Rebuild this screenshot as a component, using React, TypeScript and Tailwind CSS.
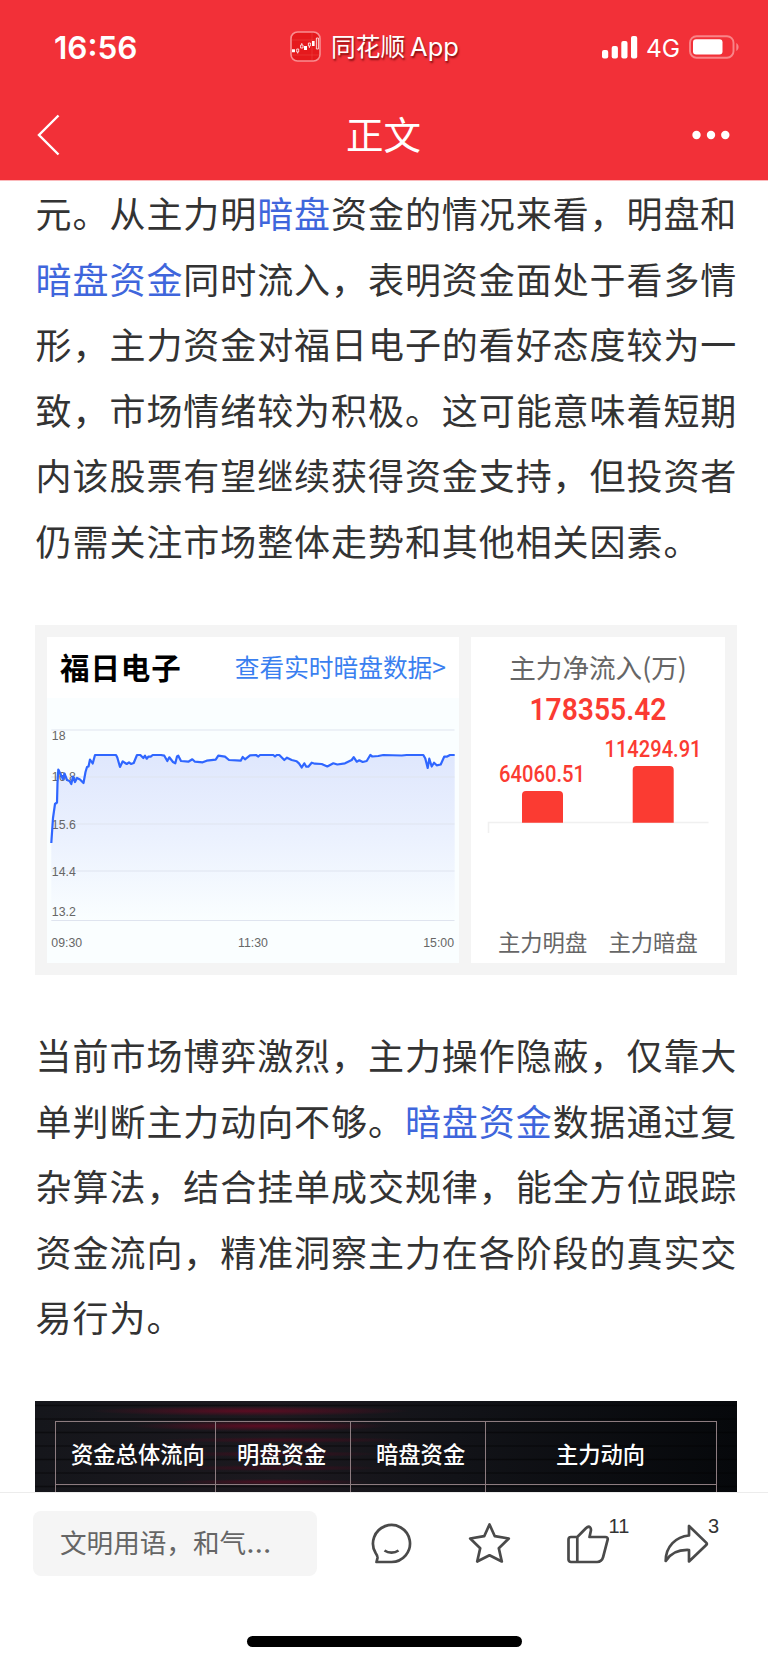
import React from 'react';

const LINK_COLOR = 'text-[#3f66dc]';

interface Segment {
  text: string;
  link?: boolean;
}

const introLines: Segment[][] = [
  [{ text: '元。从主力明' }, { text: '暗盘', link: true }, { text: '资金的情况来看，明盘和' }],
  [{ text: '暗盘资金', link: true }, { text: '同时流入，表明资金面处于看多情' }],
  [{ text: '形，主力资金对福日电子的看好态度较为一' }],
  [{ text: '致，市场情绪较为积极。这可能意味着短期' }],
  [{ text: '内该股票有望继续获得资金支持，但投资者' }],
  [{ text: '仍需关注市场整体走势和其他相关因素。' }],
];

const analysisLines: Segment[][] = [
  [{ text: '当前市场博弈激烈，主力操作隐蔽，仅靠大' }],
  [{ text: '单判断主力动向不够。' }, { text: '暗盘资金', link: true }, { text: '数据通过复' }],
  [{ text: '杂算法，结合挂单成交规律，能全方位跟踪' }],
  [{ text: '资金流向，精准洞察主力在各阶段的真实交' }],
  [{ text: '易行为。' }],
];

// Price series, in px of the chart area (412 x 265)
const PRICE_LINE =
  '4.3,145 6,120 8,106 10,104.5 10.5,85 11.3,71.5 13,75 16,81 17.5,75.5 20,82 22.5,83 24.3,86 26,78.5 28,84 30,80 33,81.5 36.5,85 38.5,74 40,69 41.5,68.5 43,61.5 45.7,65.5 48,57 69,57 70.3,59.5 73,69 75.7,63.3 79.7,66 82,64.3 84,66 86.7,65 90,57 93.3,57 96.3,60 98,57.7 99.7,60.7 101.5,58.5 103.7,58.7 105.7,57 114,57 117.3,57.7 120.3,63 122.3,59.3 126,64 128.3,65.3 130,58.5 131.3,57.7 134,63 141.3,63.7 145.3,61.3 148,63.7 155.7,64.3 159.7,62.7 168.7,61.7 171.3,57.7 178,58.7 182,62 193.7,62.7 195.7,59 198,61.3 203,57.3 209,57 211.3,58.5 213,57 226.3,57 228,58.5 229.7,57 232.3,57 237.3,62 240,59.7 244.7,62 249.7,63.3 252,65.3 254.7,69.5 257.3,65.3 259.3,68.7 261.3,68.7 264.7,64.7 268,65.7 274.7,66 280.3,68.5 286.3,65.3 290.3,66.5 298,65.3 304.7,62 306.7,59.2 309.7,63.7 312.3,62.3 315.7,64 319.7,63 323.3,57 325.3,58.5 331.3,58 336.3,57 354.7,57.5 359.7,57 376.3,57 378.3,60.5 380.7,70 382.3,60.7 384.7,68.5 387,64.7 389.7,67.3 393.7,66.5 397.3,58.5 399.7,58.7 403,57 407.7,57';

const gridLines = [32, 79, 126, 173, 222.5];

const Paragraph: React.FC<{ lines: Segment[][] }> = ({ lines }) => (
  <p className="text-[36px] leading-[65.5px] tracking-[0.93px] text-[#333]">
    {lines.map((line, i) => (
      <span key={i} className="block whitespace-nowrap">
        {line.map((seg) => (
          <span key={seg.text} className={seg.link ? LINK_COLOR : undefined}>
            {seg.text}
          </span>
        ))}
      </span>
    ))}
  </p>
);

const StatusBar = () => (
  <div className="flex h-[94px] items-center text-white">
    <div className="ml-[54px] w-[236px] pt-px font-['Inter'] text-[31.5px] leading-none font-semibold">16:56</div>
    <svg className="-mt-[2px]" width="31" height="31" viewBox="0 0 31 31" fill="none">
      <rect x="1" y="1" width="29" height="29" rx="6.5" fill="#e5191d" stroke="#f98d90" strokeWidth="1.6" />
      <path d="M2 9h27M2 24h27M22 2v27" stroke="#ee4a45" strokeWidth="0.5" />
      <path d="M2 18.2h3v3H2zM14 15h3v4h-3zM22 10h2.6v5H22z" fill="#fff" />
      <path d="M6.7 18h2v3h-2zM7.7 21v1.5M10.6 14h2.4v3h-2.4zM11.8 12v2M18.4 12h2v3h-2zM19.4 15v2M26.4 7h2v11h-2z" stroke="#fff" strokeWidth="0.8" />
    </svg>
    <div className="-mt-px ml-[10px] flex gap-[5px] text-[24.7px] leading-none whitespace-nowrap [text-shadow:1px_2px_2px_rgba(80,0,0,0.7)]">
      <span>同花顺</span>
      <span className="pt-px font-['Inter'] text-[25.5px]">App</span>
    </div>
    <div className="mr-[28px] ml-auto flex items-center">
      <svg width="36" height="23" viewBox="0 0 36 23" fill="#fff">
        <rect x="0" y="14" width="6.2" height="8.5" rx="2" />
        <rect x="9.7" y="10" width="6.2" height="12.5" rx="2" />
        <rect x="19.3" y="5" width="6.2" height="17.5" rx="2" />
        <rect x="29" y="0" width="6.2" height="22.5" rx="2" />
      </svg>
      <span className="ml-[8px] pt-[3px] font-['Inter'] text-[24.5px] leading-none">4G</span>
      <svg className="ml-[9px]" width="51" height="24" viewBox="0 0 51 24" fill="none">
        <rect x="1" y="1.2" width="43.5" height="21.5" rx="6.5" stroke="#f98488" strokeWidth="1.9" />
        <rect x="4" y="4.2" width="29.5" height="15.2" rx="3" fill="#fff" />
        <path d="M47.3 8v8c3-1.6 3-6.4 0-8z" fill="#f98488" />
      </svg>
    </div>
  </div>
);

const NavBar = () => (
  <div className="flex h-[86px] items-center justify-between pr-[38px] pb-[4px] pl-[37px] text-white">
    <svg width="24" height="42" viewBox="0 0 24 42" fill="none" stroke="#fff" strokeWidth="2.4">
      <path d="M21.5 1.5L2 21l19.5 19.5" />
    </svg>
    <h1 className="-mt-[4px] ml-[14px] text-[37.5px] leading-none font-normal">正文</h1>
    <svg width="38" height="10" viewBox="0 0 38 10" fill="#fff">
      <circle cx="4.5" cy="5" r="4.2" />
      <circle cx="19" cy="5" r="4.2" />
      <circle cx="33.3" cy="5" r="4.2" />
    </svg>
  </div>
);

const PriceChart = () => (
  <div className="w-[412px] bg-white">
    <div className="flex h-[61px] items-center justify-between px-[13px]">
      <span className="-mt-[2px] text-[29.5px] leading-none font-bold tracking-[0.9px] text-black">福日电子</span>
      <span className="-mt-[3px] text-[24.7px] leading-none text-[#3a7ff0]">查看实时暗盘数据&gt;</span>
    </div>
    <svg width="412" height="265" viewBox="0 0 412 265">
      <defs>
        <linearGradient id="area" x1="0" y1="57" x2="0" y2="222" gradientUnits="userSpaceOnUse">
          <stop offset="0" stopColor="#dfe7fd" />
          <stop offset="0.5" stopColor="#ebf1fe" />
          <stop offset="1" stopColor="#fafeff" />
        </linearGradient>
      </defs>
      <rect width="412" height="265" fill="#fafeff" />
      <polygon points={`4.3,222 ${PRICE_LINE} 407.7,222`} fill="url(#area)" />
      {gridLines.map((y) => (
        <line key={y} x1="4.3" x2="407.5" y1={y} y2={y} stroke="#dfe4ef" />
      ))}
      <g fill="#666" fontFamily="Liberation Sans, Arial, sans-serif" fontSize="12.3">
        <text x="4.8" y="41.5">18</text>
        <text x="4.8" y="83">16.8</text>
        <text x="4.8" y="131">15.6</text>
        <text x="4.8" y="178">14.4</text>
        <text x="4.8" y="218">13.2</text>
        <text x="4.3" y="249">09:30</text>
        <text x="191" y="249">11:30</text>
        <text x="407" y="249" textAnchor="end">15:00</text>
      </g>
      <polyline points={PRICE_LINE} fill="none" stroke="#2f66ff" strokeWidth="2.2" strokeLinejoin="round" />
    </svg>
  </div>
);

const InflowCard = () => (
  <div className="flex w-[254px] flex-col items-center bg-white">
    <div className="mt-[16px] text-[26.6px] leading-[28px] text-[#666]">主力净流入(万)</div>
    <svg width="254" height="280" viewBox="0 -42 254 280">
      <path d="M17.5 110v-10.5h220" fill="none" stroke="#f0f0f0" strokeWidth="1.5" />
      <path d="M51 99.7V72a4 4 0 0 1 4-4h33a4 4 0 0 1 4 4v27.700zM161.7 99.700V47a4 4 0 0 1 4-4h33a4 4 0 0 1 4 4v52.700z" fill="#fb3b32" />
      <g fill="#fb3b32" fontFamily="Roboto, sans-serif" fontSize="23" fontWeight="500">
        <text x="58.5" y="-3.5" fontSize="31" fontWeight="600" textLength="137" lengthAdjust="spacingAndGlyphs">178355.42</text>
        <text x="28" y="59" textLength="86" lengthAdjust="spacingAndGlyphs">64060.51</text>
        <text x="133.5" y="33.5" textLength="97" lengthAdjust="spacingAndGlyphs">114294.91</text>
      </g>
      <g fill="#666" fontSize="22.3">
        <text x="27" y="228">主力明盘</text>
        <text x="137.5" y="228">主力暗盘</text>
      </g>
    </svg>
  </div>
);

const FlowTable = () => (
  <div className="h-[92px] overflow-hidden bg-[#14151a] bg-[radial-gradient(ellipse_160px_5px_at_215px_10px,#5c0c22_0%,transparent_100%),radial-gradient(ellipse_130px_5px_at_225px_25px,#5c0c22_0%,transparent_100%),radial-gradient(ellipse_130px_3px_at_250px_39px,#3c0e1d_0%,transparent_100%),radial-gradient(ellipse_110px_3px_at_240px_53px,#3c0e1d_0%,transparent_100%),radial-gradient(ellipse_110px_3px_at_240px_67px,#3c0e1d_0%,transparent_100%),radial-gradient(ellipse_100px_3px_at_235px_81px,#4a0e20_0%,transparent_100%),repeating-linear-gradient(180deg,transparent_0px,transparent_3px,rgba(0,0,0,0.45)_4.5px,transparent_6px,transparent_13.5px),linear-gradient(90deg,#15161b_0%,#1c191f_35%,#121318_60%,#06080b_100%)] pt-[20px] pl-[20px]">
    <div className="grid h-[64px] w-[662px] grid-cols-[160px_135px_135px_1fr] border border-[#8d7c80] text-[22.3px] leading-[63px] font-medium text-white">
      <div className="border-r border-[#8d7c80] pl-[15px]">资金总体流向</div>
      <div className="border-r border-[#8d7c80] pl-[21px]">明盘资金</div>
      <div className="border-r border-[#8d7c80] pl-[25px]">暗盘资金</div>
      <div className="pr-px text-center">主力动向</div>
    </div>
    <div className="grid h-[8px] w-[662px] grid-cols-[160px_135px_135px_1fr] border-x border-[#8d7c80]">
      <div className="border-r border-[#8d7c80]" />
      <div className="border-r border-[#8d7c80]" />
      <div className="border-r border-[#8d7c80]" />
    </div>
  </div>
);

const BottomBar = () => (
  <footer className="h-[171px] border-t border-[#ececec] bg-white">
    <div className="flex pt-[18px] pl-[33px]">
      <div className="h-[65px] w-[284px] rounded-[8px] bg-[#f5f5f5] pl-[27px] text-[26.6px] leading-[61px] text-[#666]">
        文明用语，和气<span className="font-['Inter'] text-[29px]">…</span>
      </div>
      <svg width="433" height="65" viewBox="317 1510.5 433 65" fill="none" stroke="#4a4a4a" strokeWidth="2.7" strokeLinejoin="round">
        <path d="M376.5 1561.5h15a18.5 18.5 0 1 0-16-9.2c1.6 2.4 2.2 3.6 2 5.2z" />
        <path d="M384.5 1550c4 2.8 10 2.8 14 0" />
        <path d="M489.5 1524l5.3 11.7 14 2.3-10 9.7 3 13.3-12.3-6.2-12.3 6.2 3-13.3-10-9.7 14-2.3z" />
        <path d="M577.3 1536.5v25M577.3 1536.5l8.6-8.8c1.3-1.2 3-2 4.2-.8 1 1 1 2.6.6 4.1l-1.2 5.5h15.8c1.9 0 2.8 1 2.3 2.9l-4.500 17.300c-.9 3.200-2.800 4.800-6 4.800H571a2.500 2.500 0 0 1-2.500-2.500v-20a2.500 2.500 0 0 1 2.500-2.500z" />
        <path d="M689 1525.5v9.5c-13 1-23.3 11-23.3 25.5 5-8 12-11.5 23.3-11v11.500l17.200-16.400c1-1 1-1.500 0-2.500z" />
        <g fill="#333" stroke="none" fontFamily="Liberation Sans, Arial, sans-serif" fontSize="20">
          <text x="608.5" y="1532.5">11</text>
          <text x="708" y="1532.5">3</text>
        </g>
      </svg>
    </div>
    <div className="mx-auto mt-[60px] h-[10.5px] w-[275px] rounded-full bg-black" />
  </footer>
);

export default function App() {
  return (
    <div className="flex h-[1663px] w-[768px] flex-col overflow-hidden bg-white font-['Noto_Sans_CJK_SC',sans-serif]">
      <header className="h-[181px] shrink-0 border-b border-[#fbb9bb] bg-[#f23038]">
        <StatusBar />
        <NavBar />
      </header>
      <main className="h-[1311px] shrink-0 overflow-hidden pr-[31px] pl-[35px]">
        <div className="-mt-px ml-[0.6px]">
          <Paragraph lines={introLines} />
        </div>
        <div className="mt-[52px] flex h-[350px] w-[702px] gap-[12px] bg-[#f4f4f4] p-[12px]">
          <PriceChart />
          <InflowCard />
        </div>
        <div className="mt-[47px] ml-[0.6px]">
          <Paragraph lines={analysisLines} />
        </div>
        <div className="mt-[51px] w-[702px]">
          <FlowTable />
        </div>
      </main>
      <BottomBar />
    </div>
  );
}
